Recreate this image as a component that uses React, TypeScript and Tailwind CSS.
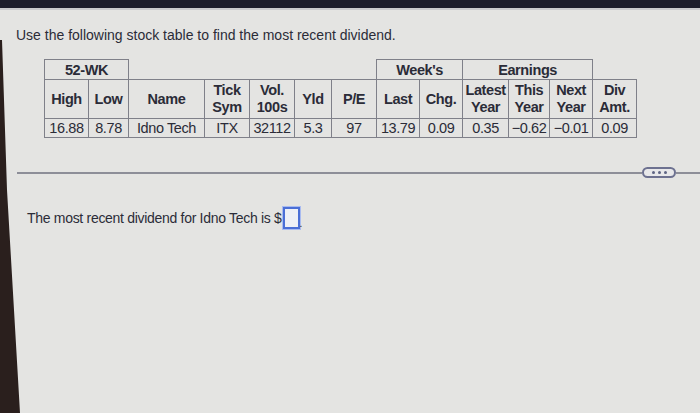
const font = { fontFamily: "'Liberation Sans', Arial, sans-serif" };

const cols = [44, 40, 76, 45, 45, 37, 45, 43, 43, 46, 41, 43, 44];

const headers: string[][] = [
  ["High"],
  ["Low"],
  ["Name"],
  ["Tick", "Sym"],
  ["Vol.", "100s"],
  ["Yld"],
  ["P/E"],
  ["Last"],
  ["Chg."],
  ["Latest", "Year"],
  ["This", "Year"],
  ["Next", "Year"],
  ["Div", "Amt."],
];

const row = ["16.88", "8.78", "Idno Tech", "ITX", "32112", "5.3", "97", "13.79", "0.09", "0.35", "\u22120.62", "\u22120.01", "0.09"];

const cell = "border border-[#7f8089] text-center p-0";

const StockTable = () => (
  <table className="border-collapse table-fixed text-[14.5px] tracking-[-0.4px] text-[#2b2c38]" style={{ width: 592 }}>
    <colgroup>
      {cols.map((w, i) => (
        <col key={i} style={{ width: w }} />
      ))}
    </colgroup>
    <tbody>
      <tr className="h-[20px] font-bold leading-[18px]">
        <td colSpan={2} className={cell}>52-WK</td>
        <td colSpan={5} className="p-0" />
        <td colSpan={2} className={cell}>Week's</td>
        <td colSpan={3} className={cell}>Earnings</td>
        <td className="p-0" />
      </tr>
      <tr className="h-[39px] font-bold leading-[17px]">
        {headers.map((lines, i) => (
          <td key={i} className={cell}>
            {lines.map((l) => (
              <div key={l}>{l}</div>
            ))}
          </td>
        ))}
      </tr>
      <tr className="h-[19px] leading-[17px]">
        {row.map((v, i) => (
          <td key={i} className={`${cell} whitespace-nowrap`}>{v}</td>
        ))}
      </tr>
    </tbody>
  </table>
);

const App = () => {
  return (
    <div className="relative w-[700px] h-[413px] overflow-hidden bg-[#e4e4e2]" style={font}>
      <div className="h-[10px] bg-[#1d1d2b] border-b-2 border-[#c9c9cc]" />

      <div className="pl-[16px] pt-[15px] text-[14px] leading-[20px] text-[#2b2c38]">
        Use the following stock table to find the most recent dividend.
      </div>

      <div className="pl-[44px] mt-[14px]">
        <StockTable />
      </div>

      <div className="flex items-center mt-[29px] pl-[17px]">
        <div className="flex-1 h-[2px] bg-[#8d8e98]" />
        <div className="flex items-center justify-center gap-[3px] w-[34px] h-[11px] rounded-full border-2 border-[#6d7190] bg-[#e8e8ea]">
          <span className="w-[3px] h-[3px] rounded-full bg-[#5e6484]" />
          <span className="w-[3px] h-[3px] rounded-full bg-[#5e6484]" />
          <span className="w-[3px] h-[3px] rounded-full bg-[#5e6484]" />
        </div>
        <div className="w-[24px] h-[2px] bg-[#8d8e98]" />
      </div>

      <div className="flex items-center pl-[27px] mt-[29px] text-[14px] tracking-[-0.3px] leading-[20px] text-[#2b2c38]">
        <span>The most recent dividend for Idno Tech is $</span>
        <span className="ml-[1px] w-[17px] h-[22px] border-2 border-[#4b6fd6] bg-[#eef0f6] shadow-[0_0_0_1px_#a9bbf0]" />
        <span className="self-end text-[10px] leading-[10px]">.</span>
      </div>

      <svg className="absolute left-0 top-0" width="700" height="413" viewBox="0 0 700 413">
        <polygon points="0,40 2,40 7,190 20,413 0,413" fill="#2a1f1d" />
      </svg>
    </div>
  );
};

export default App;
